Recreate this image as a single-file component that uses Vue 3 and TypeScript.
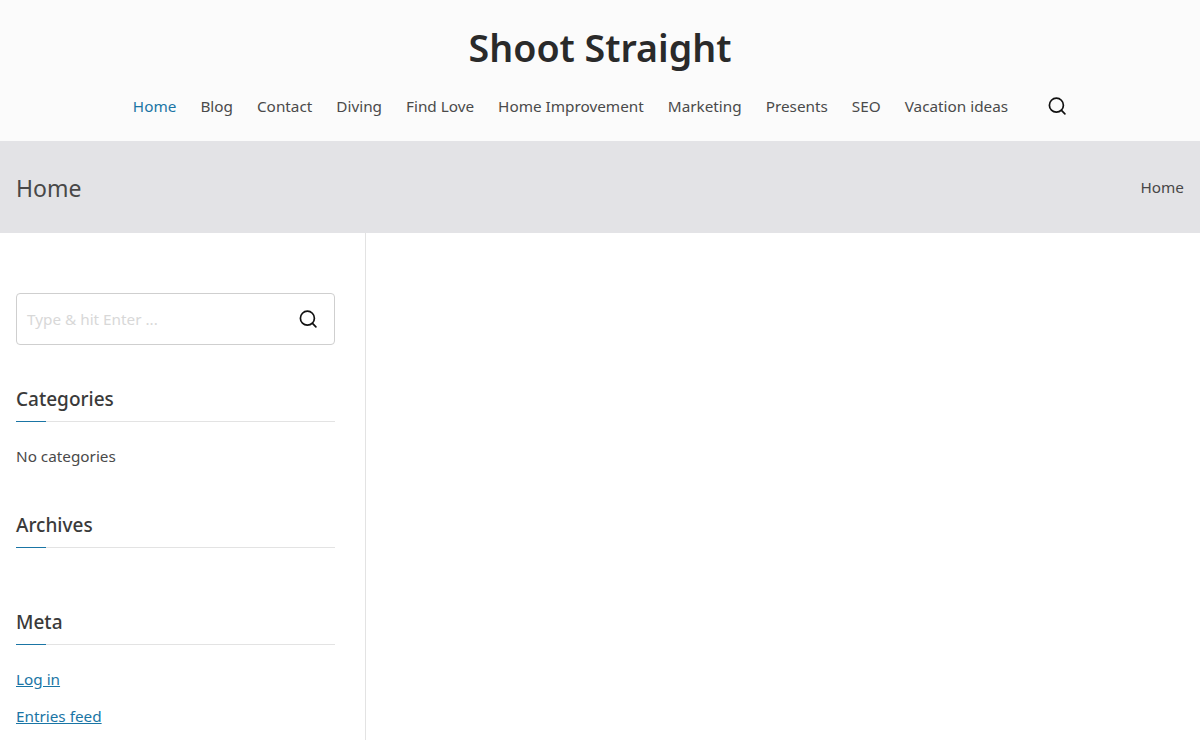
<script setup lang="ts">
const navItems: string[] = ['Home', 'Blog', 'Contact', 'Diving', 'Find Love', 'Home Improvement', 'Marketing', 'Presents', 'SEO', 'Vacation ideas']
</script>

<template>
  <div class="page">
    <header class="site-header">
      <h1 class="site-title">Shoot Straight</h1>
      <nav class="nav">
        <a v-for="(item, i) in navItems" :key="item" href="#" class="nav-link" :class="{ active: i === 0 }">{{ item }}</a>
        <span class="nav-search">
          <svg width="20" height="20" viewBox="0 0 20 20" fill="none" stroke="#111" stroke-width="1.7" stroke-linecap="round"><circle cx="9.4" cy="9.2" r="7"/><path d="M14.5 14.4l3.4 3.4"/></svg>
        </span>
      </nav>
    </header>
    <section class="banner">
      <h2 class="banner-title">Home</h2>
      <span class="crumb">Home</span>
    </section>
    <div class="content">
      <aside class="sidebar">
        <div class="search">
          <span class="placeholder">Type &amp; hit Enter ...</span>
          <svg width="20" height="20" viewBox="0 0 20 20" fill="none" stroke="#111" stroke-width="1.7" stroke-linecap="round"><circle cx="9.4" cy="9.2" r="7"/><path d="M14.5 14.4l3.4 3.4"/></svg>
        </div>
        <h3 class="widget-title first">Categories</h3>
        <p class="widget-text">No categories</p>
        <h3 class="widget-title archives">Archives</h3>
        <h3 class="widget-title meta">Meta</h3>
        <a href="#" class="widget-link first-link">Log in</a>
        <a href="#" class="widget-link">Entries feed</a>
      </aside>
      <main class="main"></main>
    </div>
  </div>
</template>

<style>
html, body { margin: 0; background: #fff; overflow: hidden; }
</style>

<style scoped>
.page {
  height: 740px;
  overflow: hidden;
  font-family: "Noto Sans", "Open Sans", sans-serif;
  color: #3d3d3d;
  display: flex;
  flex-direction: column;
}
.site-header {
  background: #fbfbfb;
  height: 141px;
  box-sizing: border-box;
  padding-top: 24px;
  display: flex;
  flex-direction: column;
  align-items: center;
  flex: none;
}
.site-title {
  margin: 0;
  font-size: 37.6px;
  line-height: 48px;
  font-weight: 600;
  color: #2a2a2a;
}
.nav {
  display: flex;
  align-items: center;
  gap: 24px;
  margin-top: 22px;
  height: 24px;
  font-size: 15.3px;
}
.nav-link { color: #4a4a4a; text-decoration: none; line-height: 24px; }
.nav-link.active { color: #1a75a5; }
.nav-search { display: flex; margin-left: 15px; }
.banner {
  flex: none;
  height: 92px;
  background: #e3e3e6;
  box-sizing: border-box;
  padding: 0 16px;
  display: flex;
  align-items: center;
  justify-content: space-between;
}
.banner-title { margin: 0 0 -1px; font-size: 23px; font-weight: 400; color: #484848; }
.crumb { font-size: 15.3px; color: #484848; margin-bottom: 1px; }
.content { flex: 1; display: flex; min-height: 0; }
.sidebar {
  width: 366px;
  box-sizing: border-box;
  padding: 60px 30px 0 16px;
  border-right: 1px solid #e3e3e3;
  display: flex;
  flex-direction: column;
}
.search {
  height: 52px;
  box-sizing: border-box;
  border: 1px solid #cfcfcf;
  border-radius: 4px;
  display: flex;
  align-items: center;
  justify-content: space-between;
  padding: 0 16px 0 10px;
  flex: none;
}
.placeholder { font-size: 15.3px; color: #d8d8d8; }
.widget-title {
  position: relative;
  margin: 0;
  font-size: 19px;
  line-height: 26px;
  font-weight: 500;
  color: #3a3a3a;
  padding-bottom: 9px;
  border-bottom: 1px solid #e3e3e3;
}
.widget-title::after {
  content: "";
  position: absolute;
  left: 0;
  bottom: -1px;
  width: 30px;
  height: 1px;
  background: #1a75a5;
}
.first { margin-top: 41px; }
.archives { margin-top: 44px; }
.meta { margin-top: 61px; }
.widget-text { margin: 22px 0 0; font-size: 15.3px; line-height: 24px; color: #4a4a4a; }
.widget-link { font-size: 15.3px; line-height: 24px; color: #1a75a5; text-decoration: underline; margin-top: 13px; align-self: flex-start; }
.first-link { margin-top: 22px; }
.main { flex: 1; }
</style>
